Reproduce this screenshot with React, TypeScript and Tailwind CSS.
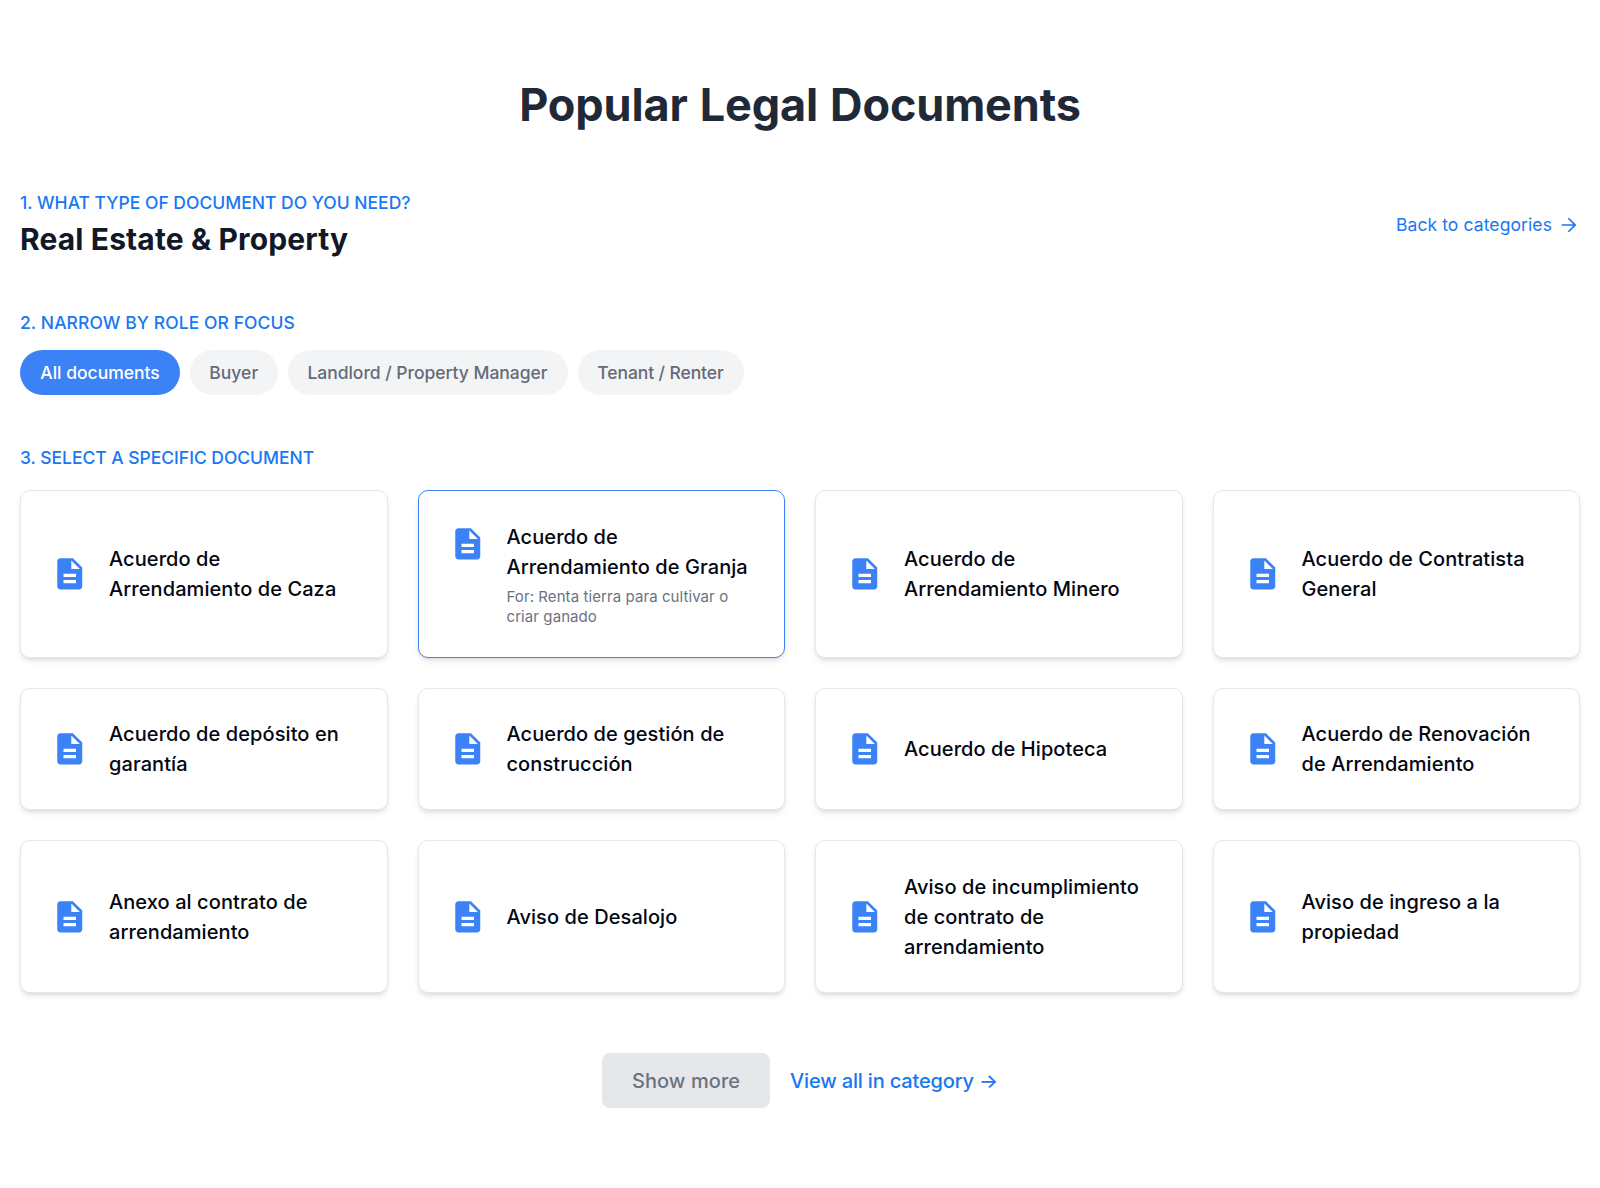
const docs: { title: string; note?: string }[] = [
  { title: 'Acuerdo de Arrendamiento de Caza' },
  { title: 'Acuerdo de Arrendamiento de Granja', note: 'For: Renta tierra para cultivar o criar ganado' },
  { title: 'Acuerdo de Arrendamiento Minero' },
  { title: 'Acuerdo de Contratista General' },
  { title: 'Acuerdo de depósito en garantía' },
  { title: 'Acuerdo de gestión de construcción' },
  { title: 'Acuerdo de Hipoteca' },
  { title: 'Acuerdo de Renovación de Arrendamiento' },
  { title: 'Anexo al contrato de arrendamiento' },
  { title: 'Aviso de Desalojo' },
  { title: 'Aviso de incumplimiento de contrato de arrendamiento' },
  { title: 'Aviso de ingreso a la propiedad' },
];

const roles = [
  { name: 'All documents', look: 'w-[160px] bg-[#3b82f6] text-white' },
  { name: 'Buyer', look: 'w-[87.5px] bg-gray-100 text-[#636b79]' },
  { name: 'Landlord / Property Manager', look: 'w-[280px] bg-gray-100 text-[#636b79] tracking-[-0.03px]' },
  { name: 'Tenant / Renter', look: 'w-[166px] bg-gray-100 text-[#636b79] tracking-[-0.1px]' },
];

function FileIcon({ className = '' }: { className?: string }) {
  return (
    <svg viewBox="0 0 24 24" className={'h-[37.5px] w-[37.5px] shrink-0 fill-[#3b82f6] ' + className}>
      <path d="M14 2H6c-1.1 0-1.99.9-1.99 2L4 20c0 1.1.89 2 1.99 2H18c1.1 0 2-.9 2-2V8l-6-6zm2 16H8v-2h8v2zm0-4H8v-2h8v2zm-3-5V3.5L18.5 9H13z" />
    </svg>
  );
}

function Arrow() {
  return (
    <svg viewBox="0 0 24 24" className="mb-px h-[22px] w-[22px] fill-current">
      <path d="M12 4l-1.3 1.3 5.8 5.8H4v1.8h12.5l-5.8 5.8L12 20l8-8z" />
    </svg>
  );
}

export default function App() {
  return (
    <main className="h-[1188px] w-[1600px] bg-white px-5 pt-20 font-['Inter',sans-serif] text-[#1f2937]">
      <h1 className="text-center text-[45px] leading-[50px] font-bold tracking-[-0.13px] [word-spacing:1.5px]">Popular Legal Documents</h1>
      <div className="mt-[59px] flex items-center justify-between">
        <div>
          <p className="text-[17.5px] leading-[27px] font-medium text-[#1877f2] uppercase">1. What type of document do you need?</p>
          <h2 className="mt-[3px] mb-px text-[30px] leading-10 font-bold tracking-[0.13px] text-[#111827]">Real Estate &amp; Property</h2>
        </div>
        <a className="mt-0.5 flex items-center gap-1.5 text-[17.5px] font-normal tracking-[0.1px] text-[#1877f2]">Back to categories<Arrow /></a>
      </div>
      <p className="mt-[49px] text-[17.5px] leading-[27px] font-medium tracking-[0.08px] text-[#1877f2] uppercase">2. Narrow by role or focus</p>
      <div className="mt-[14px] flex gap-[10px]">
        {roles.map((r) => (
          <button key={r.name} className={'h-[45px] rounded-full pt-0.5 text-center text-[17.5px] font-medium whitespace-nowrap ' + r.look}>{r.name}</button>
        ))}
      </div>
      <p className="mt-[49px] text-[17.5px] leading-[27px] font-medium tracking-[-0.03px] text-[#1877f2] uppercase">3. Select a specific document</p>
      <div className="mt-[19px] grid grid-cols-4 gap-[30px]">
        {docs.map((d) => (
          <div key={d.title} className={'flex rounded-[10px] border bg-white px-[30px] py-[30.25px] shadow-md ' + (d.note ? 'items-start border-[#3b82f6]' : 'items-center border-gray-200')}>
            <FileIcon className={d.note ? 'mt-1' : ''} />
            <div className="ml-[20.5px]">
              <h3 className={'text-xl leading-[30px] font-medium tracking-[0.08px] text-[#030712] ' + (d.note ? 'pt-px' : 'pt-[0.5px] -mb-[0.5px]')}>{d.title}</h3>
              {d.note && <p className="mt-[4.5px] -mb-[0.5px] text-[15px] leading-5 tracking-[0.08px] text-[#6b7280]">{d.note}</p>}
            </div>
          </div>
        ))}
      </div>
      <div className="mt-[60px] flex items-center justify-center gap-5 text-xl">
        <button className="h-[55px] w-[168px] rounded-lg bg-gray-200 pt-0.5 font-medium tracking-[0.08px] text-[#6b7280]">Show more</button>
        <a className="pt-0.5 font-medium tracking-[-0.17px] text-[#1877f2]">View all in category →</a>
      </div>
    </main>
  );
}
